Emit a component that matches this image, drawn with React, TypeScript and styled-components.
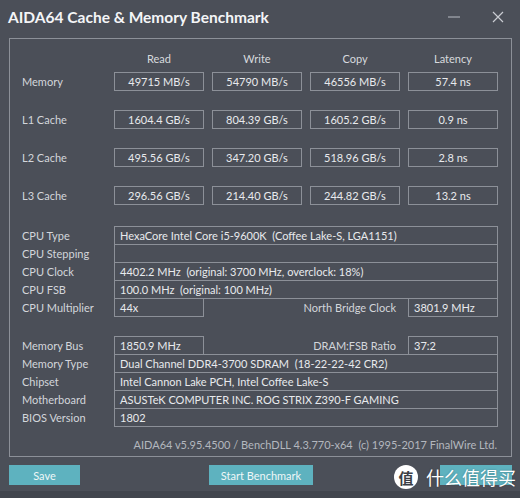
import React from "react";
import styled, { createGlobalStyle } from "styled-components";

const Global = createGlobalStyle`
  html, body { margin: 0; padding: 0; background: #4b4f58; }
  body { font-family: Lato, "Open Sans", sans-serif; }
`;

const Window = styled.div`
  position: relative;
  width: 520px;
  height: 498px;
  background: #4b4f58;
  box-sizing: border-box;
  display: flex;
  flex-direction: column;
  overflow: hidden;
  color: #dfe1e5;
  font-family: Lato, "Open Sans", sans-serif;
  font-size: 11px;
`;

const TitleBar = styled.div`
  height: 38px;
  display: flex;
  align-items: center;
  padding: 0 0 5px 8px;
  box-sizing: border-box;
`;

const Title = styled.div`
  flex: 1;
  font-size: 15.5px;
  font-weight: 700;
  color: #f4f5f7;
`;

const WinButton = styled.div`
  width: 44px;
  height: 30px;
  display: flex;
  align-items: center;
  justify-content: center;
`;

const Panel = styled.div`
  margin: 0 8px 0 9px;
  border: 1px solid #8c9098;
  padding: 13px 13px 4px 12px;
  display: flex;
  flex-direction: column;
`;

const BenchGrid = styled.div`
  display: grid;
  grid-template-columns: 84px repeat(4, 90px);
  column-gap: 8px;
  row-gap: 19px;
  align-items: center;
`;

const Header = styled.div`
  text-align: center;
  height: 14px;
  line-height: 14px;
  margin-bottom: -13px;
  color: #d7dade;
`;

const Label = styled.div`
  color: #d3d6db;
  line-height: 18px;
  white-space: nowrap;
`;

const RightLabel = styled(Label)`
  text-align: right;
  padding-right: 12px;
`;

const ValueBox = styled.div<{ $center?: boolean }>`
  height: 19px;
  box-sizing: border-box;
  border: 1px solid #8c9098;
  line-height: 17px;
  padding: 0 5px;
  color: #e8eaed;
  white-space: nowrap;
  overflow: hidden;
  text-align: ${(p) => (p.$center ? "center" : "left")};
`;

const InfoBlock = styled.div<{ $top: number }>`
  margin-top: ${(p) => p.$top}px;
  display: flex;
  flex-direction: column;
`;

const InfoRow = styled.div`
  display: grid;
  grid-template-columns: 92px 90px 204px 90px;
  align-items: center;
  height: 19px;
  & + & { margin-top: -1px; }
`;

const WideBox = styled(ValueBox)`
  grid-column: 2 / span 3;
`;

const Footer = styled.div`
  margin-top: 11px;
  text-align: right;
  color: #b3b7be;
  line-height: 14px;
  padding-right: 1px;
`;

const ButtonBar = styled.div`
  display: flex;
  align-items: center;
  padding: 8px 8px 0 9px;
  height: 20px;
`;

const Button = styled.div<{ $w: number; $ml?: number }>`
  width: ${(p) => p.$w}px;
  margin-left: ${(p) => p.$ml ?? 0}px;
  height: 20px;
  background: #5eb2bf;
  color: #eef7f8;
  display: flex;
  align-items: center;
  justify-content: center;
  font-size: 11px;
`;

const Watermark = styled.div`
  position: absolute;
  left: 394px;
  top: 465px;
  width: max-content;
  display: flex;
  align-items: center;
  gap: 8px;
  color: #ffffff;
  font-family: "Noto Sans CJK SC", sans-serif;
  white-space: nowrap;
`;

const Badge = styled.div`
  flex: none;
  width: 24px;
  height: 24px;
  border-radius: 50%;
  background: #ffffff;
  color: #3b3e45;
  display: flex;
  align-items: center;
  justify-content: center;
  font-size: 15px;
  line-height: 1;
  font-weight: 700;
`;

const WatermarkText = styled.div`
  flex: none;
  font-size: 18px;
  line-height: 24px;
  text-shadow: 0 0 2px rgba(0,0,0,0.3);
`;

const BottomEdge = styled.div`
  margin-top: auto;
  height: 7px;
  background: #41454d;
`;

const rows = [
  ["Memory", "49715 MB/s", "54790 MB/s", "46556 MB/s", "57.4 ns"],
  ["L1 Cache", "1604.4 GB/s", "804.39 GB/s", "1605.2 GB/s", "0.9 ns"],
  ["L2 Cache", "495.56 GB/s", "347.20 GB/s", "518.96 GB/s", "2.8 ns"],
  ["L3 Cache", "296.56 GB/s", "214.40 GB/s", "244.82 GB/s", "13.2 ns"],
];

const SP = "\u00a0\u00a0";

export default function App() {
  return (
    <Window>
      <Global />
      <TitleBar>
        <Title>AIDA64 Cache &amp; Memory Benchmark</Title>
        <WinButton>
          <svg width="14" height="10" viewBox="0 0 14 10">
            <line x1="1" y1="5" x2="13" y2="5" stroke="#b9bdc3" strokeWidth="1" />
          </svg>
        </WinButton>
        <WinButton>
          <svg width="12" height="12" viewBox="0 0 12 12">
            <path d="M1 1 L11 11 M11 1 L1 11" stroke="#c9ccd2" strokeWidth="1.2" />
          </svg>
        </WinButton>
      </TitleBar>
      <Panel>
        <BenchGrid>
          <div />
          <Header>Read</Header>
          <Header>Write</Header>
          <Header>Copy</Header>
          <Header>Latency</Header>
          {rows.map((r) => (
            <React.Fragment key={r[0]}>
              <Label>{r[0]}</Label>
              {r.slice(1).map((v, i) => (
                <ValueBox $center key={i}>{v}</ValueBox>
              ))}
            </React.Fragment>
          ))}
        </BenchGrid>
        <InfoBlock $top={21}>
          <InfoRow>
            <Label>CPU Type</Label>
            <WideBox>HexaCore Intel Core i5-9600K{SP}(Coffee Lake-S, LGA1151)</WideBox>
          </InfoRow>
          <InfoRow>
            <Label>CPU Stepping</Label>
            <WideBox />
          </InfoRow>
          <InfoRow>
            <Label>CPU Clock</Label>
            <WideBox>4402.2 MHz{SP}(original: 3700 MHz, overclock: 18%)</WideBox>
          </InfoRow>
          <InfoRow>
            <Label>CPU FSB</Label>
            <WideBox>100.0 MHz{SP}(original: 100 MHz)</WideBox>
          </InfoRow>
          <InfoRow>
            <Label>CPU Multiplier</Label>
            <ValueBox>44x</ValueBox>
            <RightLabel>North Bridge Clock</RightLabel>
            <ValueBox>3801.9 MHz</ValueBox>
          </InfoRow>
        </InfoBlock>
        <InfoBlock $top={19}>
          <InfoRow>
            <Label>Memory Bus</Label>
            <ValueBox>1850.9 MHz</ValueBox>
            <RightLabel>DRAM:FSB Ratio</RightLabel>
            <ValueBox>37:2</ValueBox>
          </InfoRow>
          <InfoRow>
            <Label>Memory Type</Label>
            <WideBox>Dual Channel DDR4-3700 SDRAM{SP}(18-22-22-42 CR2)</WideBox>
          </InfoRow>
          <InfoRow>
            <Label>Chipset</Label>
            <WideBox>Intel Cannon Lake PCH, Intel Coffee Lake-S</WideBox>
          </InfoRow>
          <InfoRow>
            <Label>Motherboard</Label>
            <WideBox>ASUSTeK COMPUTER INC. ROG STRIX Z390-F GAMING</WideBox>
          </InfoRow>
          <InfoRow>
            <Label>BIOS Version</Label>
            <WideBox>1802</WideBox>
          </InfoRow>
        </InfoBlock>
        <Footer>AIDA64 v5.95.4500 / BenchDLL 4.3.770-x64{SP}(c) 1995-2017 FinalWire Ltd.</Footer>
      </Panel>
      <ButtonBar>
        <Button $w={71}>Save</Button>
        <Button $w={104} $ml={129}>Start Benchmark</Button>
        <Button $w={72} $ml={127} aria-label="Close" />
      </ButtonBar>
      <BottomEdge />
      <Watermark>
        <Badge>值</Badge>
        <WatermarkText>什么值得买</WatermarkText>
      </Watermark>
    </Window>
  );
}
